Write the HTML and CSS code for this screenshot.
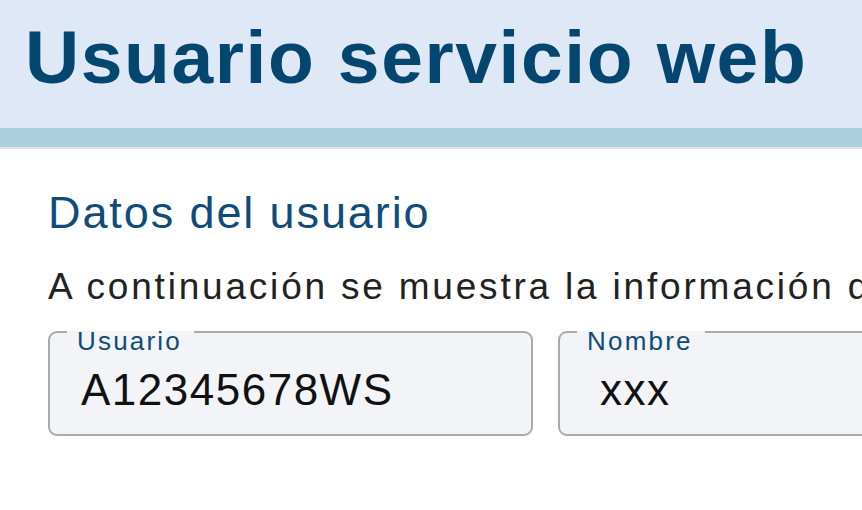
FILE: index.html
```html
<!DOCTYPE html>
<html lang="es">

<head>
  <meta charset="UTF-8">
  <meta name="viewport" content="width=device-width, initial-scale=1.0">
  <title>Usuario servicio web</title>
  <link rel="stylesheet" href="styles.css">
</head>

<body>
  <header class="page-header">
    <h1>Usuario servicio web</h1>
  </header>
  <div class="header-band"></div>

  <main class="content">
    <h2 class="section-title">Datos del usuario</h2>
    <p class="intro">A continuación se muestra la información del usuario.</p>

    <div class="fields">
      <fieldset class="field">
        <legend>Usuario</legend>
        <div class="value">A12345678WS</div>
      </fieldset>
      <fieldset class="field">
        <legend>Nombre</legend>
        <div class="value value-name">xxx</div>
      </fieldset>
    </div>
  </main>
</body>

</html>
```

FILE: styles.css
```css
* {
  margin: 0;
  padding: 0;
  box-sizing: border-box;
  font-family: 'Liberation Sans', Arial, sans-serif;
}

body {
  background: #fff;
  color: #222;
  overflow: hidden;
}

.page-header {
  background: #dfe8f6;
  height: 128px;
  padding: 12px 0 0 25px;
}

.page-header h1 {
  font-size: 75px;
  font-weight: 700;
  color: #03466f;
  letter-spacing: 1.6px;
  line-height: 90px;
}

.header-band {
  height: 21px;
  background: #abcfdf;
  border-bottom: 2px solid #e2e2e2;
}

.content {
  padding: 38px 0 0 48px;
}

.section-title {
  font-size: 45px;
  font-weight: 400;
  color: #0f4c79;
  letter-spacing: 1.9px;
  line-height: 52px;
}

.intro {
  margin-top: 26px;
  font-size: 37px;
  letter-spacing: 2.8px;
  line-height: 44px;
  white-space: nowrap;
  color: #222;
}

.fields {
  display: flex;
  gap: 25px;
  width: 1100px;
}

.field {
  flex: 0 0 485px;
  height: 127px;
  border: 2px solid #aaaaaa;
  border-radius: 9px;
  background: #f3f4f8;
  padding: 0 0 0 17px;
}

.field legend {
  padding: 19px 12px 0 10px;
  font-size: 26px;
  color: #0f4c79;
  letter-spacing: 2.2px;
  line-height: 26px;
}

.value {
  padding: 11px 0 0 14px;
  font-size: 44px;
  line-height: 50px;
  color: #111;
  letter-spacing: 1.5px;
}

.value-name {
  padding-left: 23px;
}
```
